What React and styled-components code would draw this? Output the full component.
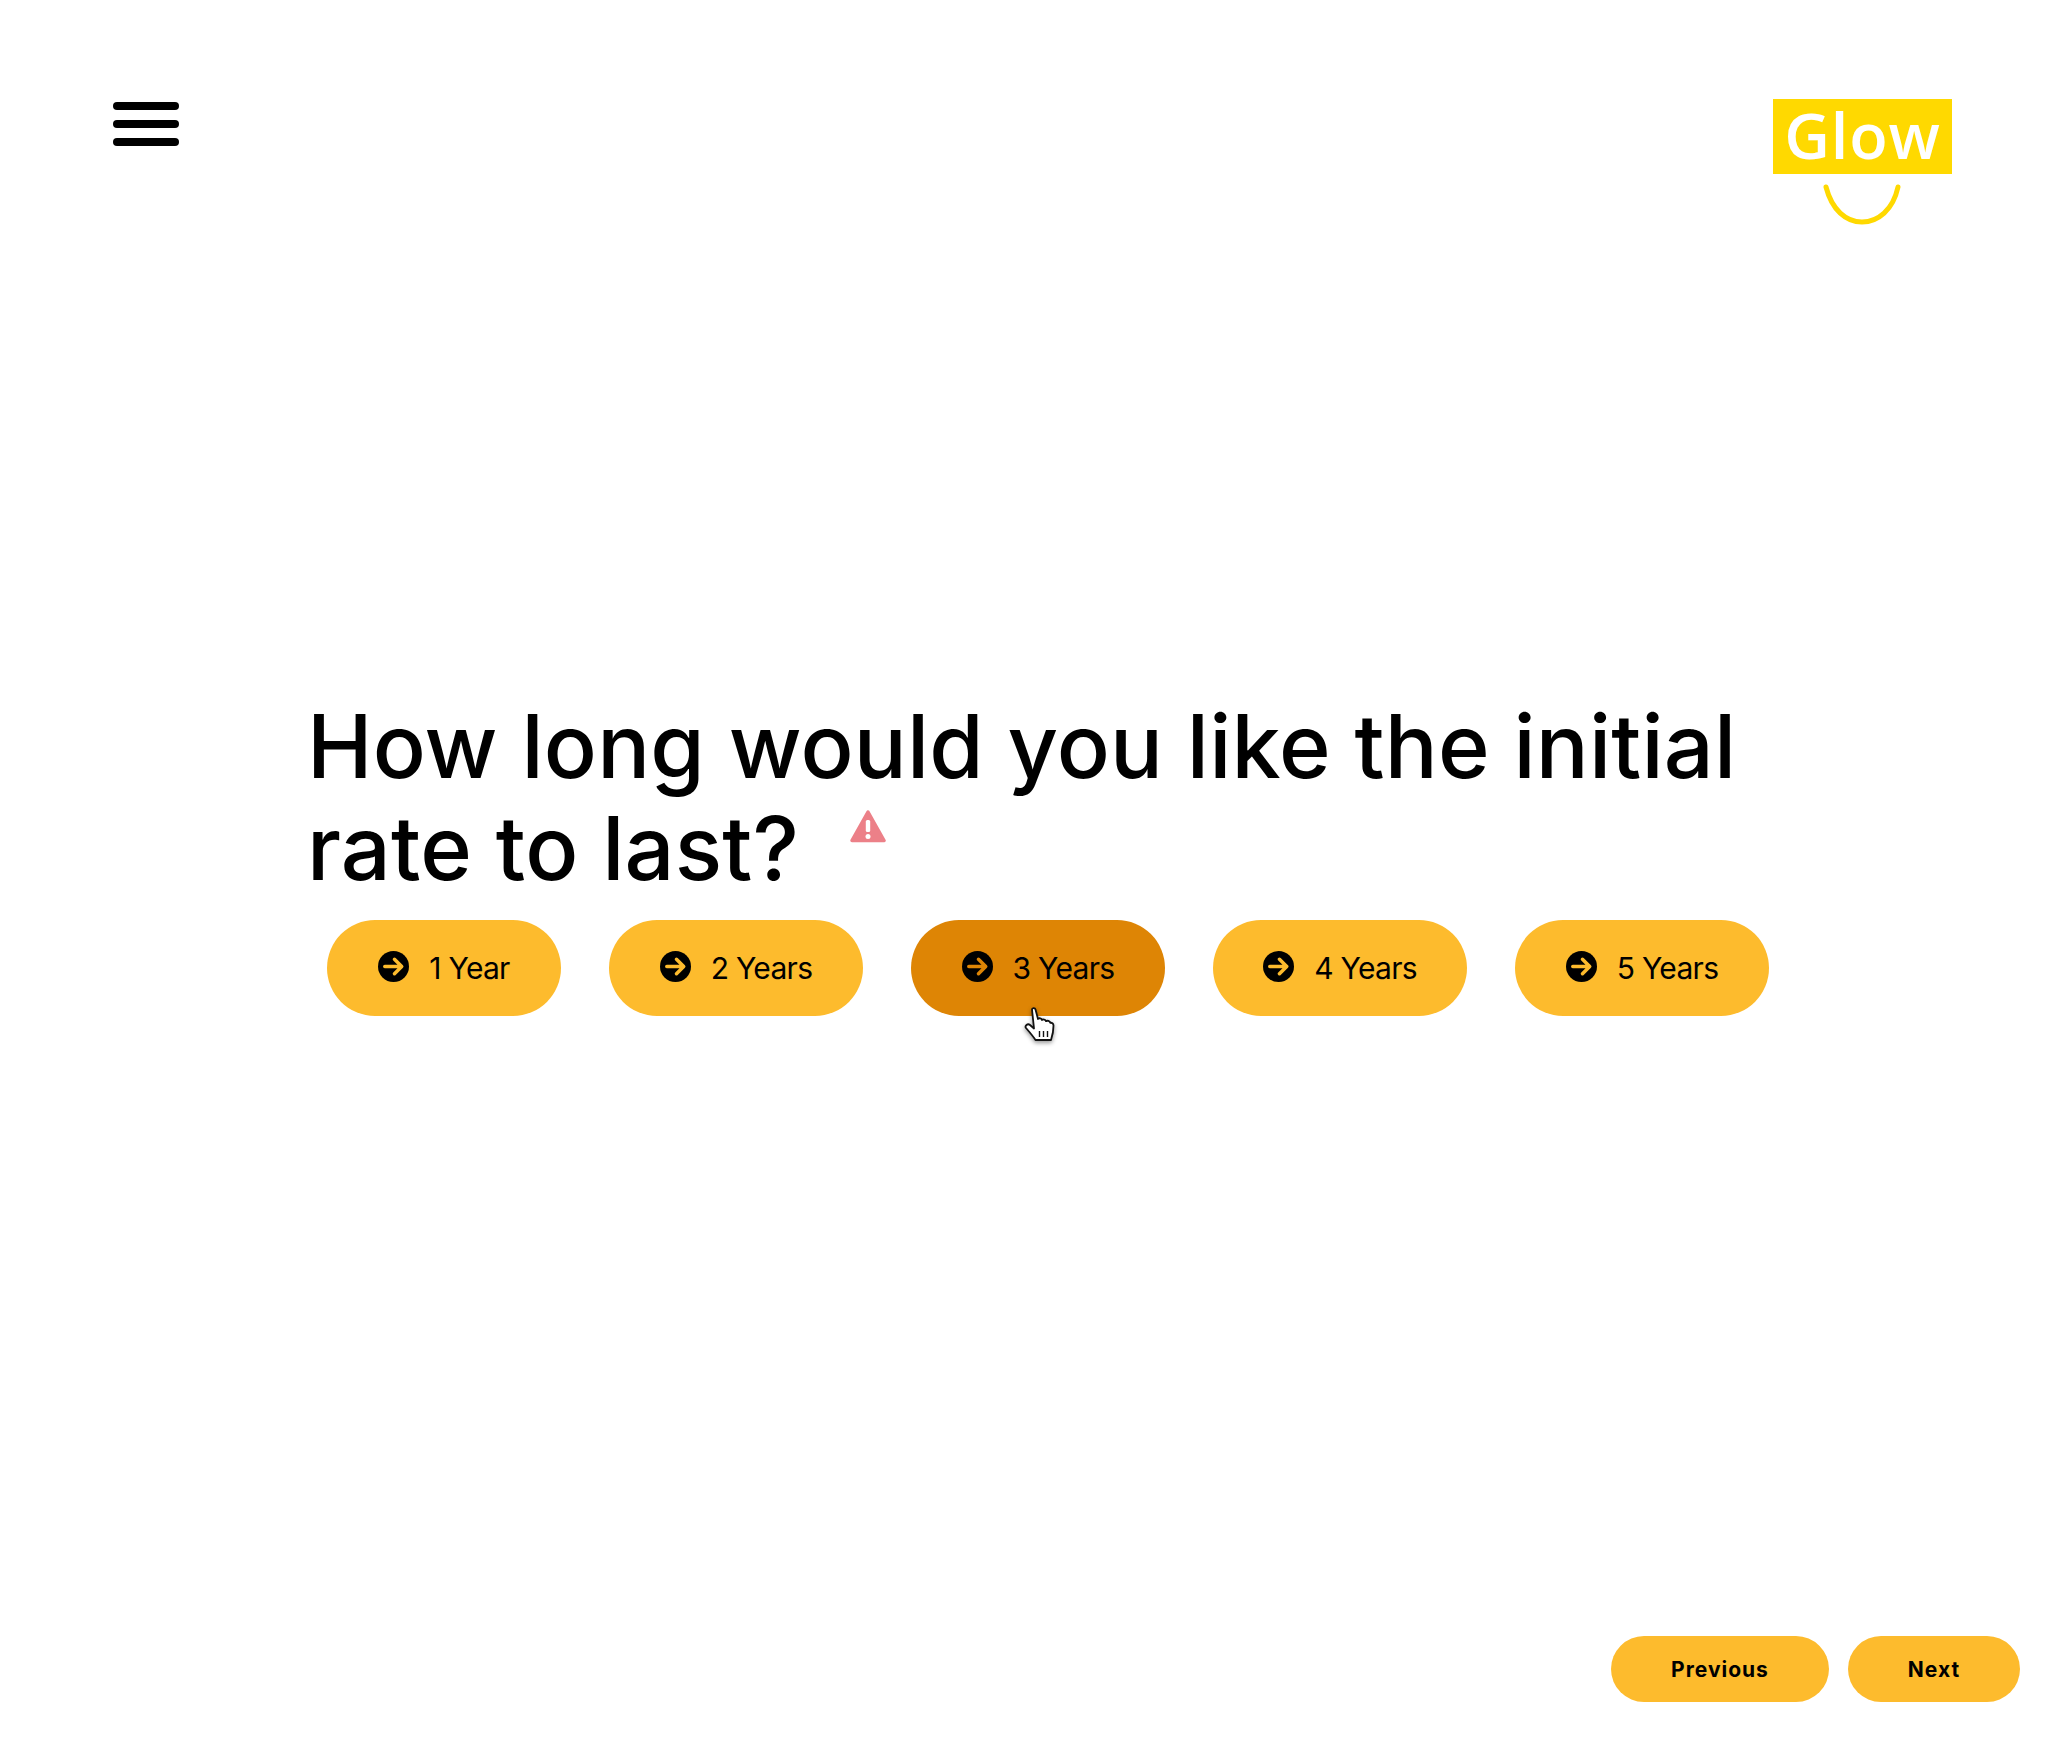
import React from "react";
import styled, { createGlobalStyle } from "styled-components";

const Global = createGlobalStyle`
  html, body { margin: 0; padding: 0; background: #fff; }
  * { box-sizing: border-box; }
`;

const Page = styled.div`
  width: 2060px;
  height: 1740px;
  display: flex;
  flex-direction: column;
  font-family: "Inter", "Liberation Sans", sans-serif;
  color: #000;
`;

const Header = styled.header`
  display: flex;
  justify-content: space-between;
  align-items: flex-start;
  padding: 99px 108px 0 113px;
`;

const Menu = styled.button`
  display: flex;
  flex-direction: column;
  gap: 10px;
  width: 66px;
  margin-top: 3px;
  padding: 0;
  border: 0;
  background: none;
`;

const MenuBar = styled.span`
  display: block;
  height: 8px;
  border-radius: 4px;
  background: #000;
`;

const Logo = styled.div`
  display: flex;
  flex-direction: column;
  align-items: center;
  width: 179px;
`;

const LogoBox = styled.div`
  width: 179px;
  height: 75px;
  background: #ffd900;
  color: #fff;
  font-family: "Open Sans", sans-serif;
  font-weight: 600;
  font-size: 63px;
  line-height: 72px;
  letter-spacing: 0.8px;
  text-align: center;
`;

const Smile = styled.svg`
  display: block;
  margin: 10px 2px 0 0;
`;

const Main = styled.main`
  flex: 1;
  display: flex;
  flex-direction: column;
  padding: 469px 0 0 307px;
`;

const Question = styled.h1`
  margin: 0;
  width: 1500px;
  font-size: 88px;
  line-height: 102px;
  font-weight: 500;
  letter-spacing: 0.2px;
`;

const Warning = styled.svg`
  display: inline-block;
  margin-left: 51px;
  vertical-align: 37px;
`;

const Options = styled.div`
  display: flex;
  gap: 48px;
  margin-top: 21px;
  padding-left: 20px;
`;

const OptionWrap = styled.div`
  position: relative;
`;

const Option = styled.button`
  display: flex;
  align-items: center;
  justify-content: center;
  gap: 20px;
  width: ${(p) => p.$width}px;
  height: 96px;
  padding: 0;
  border: 0;
  border-radius: 48px;
  background: ${(p) => (p.$active ? "#de8505" : "#fdbb2d")};
  color: #000;
  font-family: inherit;
  font-size: 30px;
  font-weight: 400;
  letter-spacing: -0.7px;
`;

const ArrowIcon = styled.svg`
  display: block;
  flex: none;
  margin-top: -4px;
`;

const Pointer = styled.svg`
  position: absolute;
  left: 113px;
  top: 87px;
  filter: drop-shadow(0 2px 2px rgba(0, 0, 0, 0.4));
`;

const Footer = styled.footer`
  display: flex;
  justify-content: flex-end;
  gap: 19px;
  padding: 0 40px 38px 0;
`;

const NavButton = styled.button`
  width: ${(p) => p.$width}px;
  height: 66px;
  padding: 0;
  border: 0;
  border-radius: 33px;
  background: #fdbb2d;
  color: #000;
  font-family: inherit;
  font-size: 21px;
  font-weight: 700;
  letter-spacing: 1px;
`;

const options = [
  { label: "1 Year", width: 234 },
  { label: "2 Years", width: 254 },
  { label: "3 Years", width: 254, active: true },
  { label: "4 Years", width: 254 },
  { label: "5 Years", width: 254 },
];

function Arrow({ color }) {
  return (
    <ArrowIcon width="31" height="31" viewBox="0 0 32 32" aria-hidden="true">
      <circle cx="16" cy="16" r="16" fill="#000" />
      <path
        d="M7 16H24M17 8.500L24.500 16L17 23.500"
        fill="none"
        stroke={color}
        strokeWidth="3.6"
        strokeLinecap="round"
        strokeLinejoin="round"
      />
    </ArrowIcon>
  );
}

export default function App() {
  return (
    <Page>
      <Global />
      <Header>
        <Menu aria-label="Menu">
          <MenuBar />
          <MenuBar />
          <MenuBar />
        </Menu>
        <Logo>
          <LogoBox>Glow</LogoBox>
          <Smile width="80" height="42" viewBox="0 0 80 42" aria-hidden="true">
            <path
              d="M4 3C10 26 24 38 40 38C56 38 71 26 76 3"
              fill="none"
              stroke="#ffd900"
              strokeWidth="5"
              strokeLinecap="round"
            />
          </Smile>
        </Logo>
      </Header>
      <Main>
        <Question>
          How long would you like the initial rate to last?
          <Warning width="36" height="33" viewBox="0 0 36 33" aria-hidden="true">
            <path
              d="M18 2L34 30.500H2Z"
              fill="#ec8088"
              stroke="#ec8088"
              strokeWidth="3.5"
              strokeLinejoin="round"
            />
            <rect x="15.800" y="10" width="4.400" height="12" rx="1.500" fill="#fff" />
            <circle cx="18" cy="26.500" r="2.500" fill="#fff" />
          </Warning>
        </Question>
        <Options>
          {options.map((o) => (
            <OptionWrap key={o.label}>
              <Option $width={o.width} $active={o.active}>
                <Arrow color={o.active ? "#de8505" : "#fdbb2d"} />
                {o.label}
              </Option>
              {o.active && (
                <Pointer width="32" height="36" viewBox="0 0 32 36" aria-hidden="true">
                  <path
                    d="M8 2.500C8 1 11 .5 11.500 2.500L14 12C15 10.800 17.500 11 18 13C19 12 21.500 12.300 22 14.200C23.200 13.300 25.800 13.800 26.300 15.800C27.800 15.500 29.500 16.500 29.500 18.500C29.500 23 29 27 27 33H11.500C9 29 5 24.500 2 21C.5 19 3.500 16 6 18L10 21.500Z"
                    fill="#fff"
                    stroke="#111"
                    strokeWidth="1.800"
                    strokeLinejoin="round"
                  />
                  <path d="M15.500 24V30M19.500 24V30M23.500 24V30" stroke="#111" strokeWidth="1.400" />
                </Pointer>
              )}
            </OptionWrap>
          ))}
        </Options>
      </Main>
      <Footer>
        <NavButton $width={218}>Previous</NavButton>
        <NavButton $width={172}>Next</NavButton>
      </Footer>
    </Page>
  );
}
